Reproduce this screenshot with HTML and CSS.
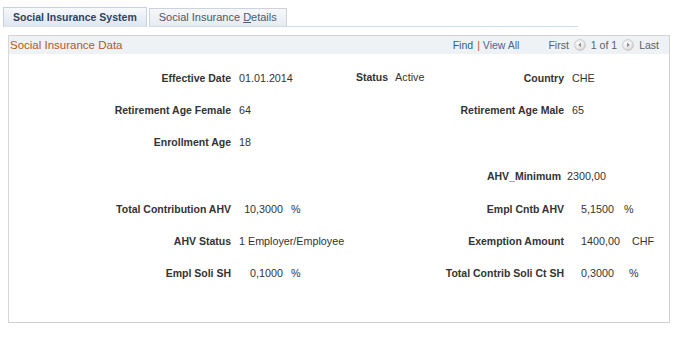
FILE: index.html
```html
<!DOCTYPE html>
<html>
<head>
<meta charset="utf-8">
<link rel="stylesheet" href="styles.css">
</head>
<body>
<div class="tabs">
  <div class="tab tab-active">Social Insurance System</div>
  <div class="tab tab-plain">Social Insurance <u>D</u>etails</div>
  <div class="tab-fill"></div>
</div>
<div class="box">
  <div class="hdr">
    <span class="title">Social Insurance Data</span>
    <div class="nav">
      <span class="find">Find</span><span class="sep">|</span><span class="viewall">View All</span>
      <span class="first">First</span>
      <svg class="navicon" width="12" height="12" viewBox="0 0 12 12"><defs><radialGradient id="g1" cx="0.4" cy="0.35" r="0.7"><stop offset="0" stop-color="#ffffff"/><stop offset="0.6" stop-color="#ececec"/><stop offset="1" stop-color="#c9c9c9"/></radialGradient></defs><circle cx="6" cy="6" r="5.4" fill="url(#g1)" stroke="#c2c2c2" stroke-width="0.8"/><polygon points="7,3.6 7,8.2 4.2,5.9" fill="#8c8c8c"/></svg>
      <span class="count">1 of 1</span>
      <svg class="navicon" width="12" height="12" viewBox="0 0 12 12"><defs><radialGradient id="g2" cx="0.4" cy="0.35" r="0.7"><stop offset="0" stop-color="#ffffff"/><stop offset="0.6" stop-color="#ececec"/><stop offset="1" stop-color="#c9c9c9"/></radialGradient></defs><circle cx="6" cy="6" r="5.4" fill="url(#g2)" stroke="#c2c2c2" stroke-width="0.8"/><polygon points="5,3.6 5,8.2 7.8,5.9" fill="#8c8c8c"/></svg>
      <span class="last">Last</span>
    </div>
  </div>
  <div class="grid">
    <div class="lbl">Effective Date</div>
    <div class="val">01.01.2014</div>
    <div class="mid"><span class="status"><span class="lbl">Status</span><span class="val-inline">Active</span></span><span class="lbl">Country</span></div>
    <div class="val">CHE</div>

    <div class="lbl">Retirement Age Female</div>
    <div class="val">64</div>
    <div class="lbl">Retirement Age Male</div>
    <div class="val">65</div>

    <div class="lbl">Enrollment Age</div>
    <div class="val">18</div>
    <div></div>
    <div></div>

    <div></div>
    <div></div>
    <div class="lbl lbl-tight">AHV_Minimum</div>
    <div class="val val-tight">2300,00</div>

    <div class="lbl">Total Contribution AHV</div>
    <div class="val"><span class="num-l">10,3000</span><span class="unit-l">%</span></div>
    <div class="lbl">Empl Cntb AHV</div>
    <div class="val"><span class="num-r w43">5,1500</span><span>%</span></div>

    <div class="lbl">AHV Status</div>
    <div class="val">1 Employer/Employee</div>
    <div class="lbl">Exemption Amount</div>
    <div class="val"><span class="num-r w51">1400,00</span><span>CHF</span></div>

    <div class="lbl">Empl Soli SH</div>
    <div class="val"><span class="num-l">0,1000</span><span class="unit-l">%</span></div>
    <div class="lbl">Total Contrib Soli Ct SH</div>
    <div class="val"><span class="num-r w48">0,3000</span><span>%</span></div>
  </div>
</div>
</body>
</html>
```
FILE: styles.css
```css
body {
  margin: 0;
  background: #ffffff;
  font-family: "Liberation Sans", Arial, sans-serif;
}

.tabs {
  display: flex;
  align-items: flex-end;
  height: 27px;
  padding-left: 3px;
}

.tab {
  box-sizing: border-box;
  padding: 0 9px;
  white-space: nowrap;
}

.tab-active {
  height: 20px;
  line-height: 19px;
  border: 1px solid #c4d1e1;
  border-bottom: none;
  background: linear-gradient(#f7f9fc, #dce5ef);
  font-size: 10.5px;
  font-weight: bold;
  color: #2f4361;
}

.tab-plain {
  height: 19px;
  line-height: 17px;
  margin-left: 2px;
  border: 1px solid #cbd3dd;
  border-bottom-color: #cddcf0;
  background: linear-gradient(#f6f7f9, #e7ebf0);
  font-size: 11px;
  color: #4c5a6e;
}

.tab-plain u {
  text-decoration-thickness: 1px;
}

.tab-fill {
  width: 291px;
  border-bottom: 1px solid #cddcf0;
}

.box {
  box-sizing: border-box;
  margin: 8px 0 0 8px;
  width: 662px;
  height: 288px;
  border: 1px solid #d8d8d8;
  border-right-color: #d0d0d0;
  border-bottom-color: #d0d0d0;
}

.hdr {
  display: flex;
  justify-content: space-between;
  align-items: center;
  height: 18px;
  padding: 0 10px 0 1px;
  background: #eef2f4;
  border-top: 1px solid #cfd4d7;
  margin-top: -1px;
}

.title {
  font-size: 11.5px;
  color: #b4591d;
}

.nav {
  display: flex;
  align-items: center;
  font-size: 10.5px;
  color: #56616d;
}

.find {
  color: #2a5da6;
}

.sep {
  color: #c0553a;
  margin: 0 3px 0 4px;
}

.viewall {
  color: #4a6790;
}

.first {
  margin-left: 29px;
}

.navicon {
  margin: 0 5px;
  display: block;
}

.grid {
  display: grid;
  grid-template-columns: 222px 125px 208px 105px;
  grid-template-rows: 32px 32px 32px 35px 32px 32px 32px;
  align-items: center;
  padding-top: 8px;
  color: #333333;
}

.lbl {
  font-size: 10.5px;
  font-weight: bold;
  color: #333333;
  text-align: right;
  white-space: nowrap;
}

.lbl-tight {
  padding-right: 3px;
}

.val {
  font-size: 10.75px;
  padding-left: 8px;
  white-space: nowrap;
  display: flex;
  align-items: center;
}

.val-tight {
  padding-left: 3px;
}

.val-inline {
  font-size: 10.75px;
  margin-left: 7px;
}

.mid {
  display: flex;
  justify-content: space-between;
  align-items: center;
}

.status {
  display: flex;
  align-items: center;
  margin-top: -2px;
}

.num-l {
  display: inline-block;
  width: 44px;
  text-align: right;
}

.unit-l {
  margin-left: 8px;
}

.num-r {
  display: inline-block;
  margin-left: 9px;
}

.w43 { width: 43px; }
.w51 { width: 51px; }
.w48 { width: 48px; }
```
